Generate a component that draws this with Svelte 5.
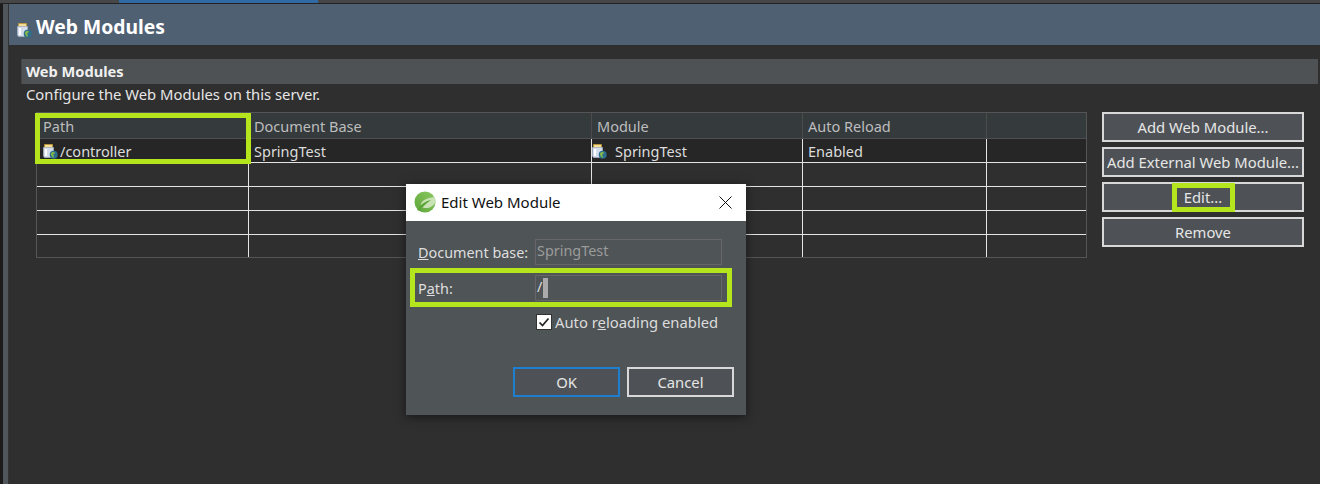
<script>
  const cols = ['Path', 'Document Base', 'Module', 'Auto Reload', ''];
  const rows = [0, 1, 2, 3];
  const buttons = ['Add Web Module...', 'Add External Web Module...', 'Edit...', 'Remove'];
</script>

{#snippet moduleIcon(cls)}
  <svg class={cls} width="15" height="15" viewBox="0 0 15 15" aria-hidden="true">
    <path d="M1.500 .5h8v3h-8z" fill="#f1dc9a" stroke="#c79a2e" stroke-width=".8" />
    <path d="M.5 3.500h10v8.500l-1 1.500h-8l-1-1.500z" fill="#d3dcec" stroke="#a9b6c8" stroke-width=".7" />
    <path d="M2 5h2v7h-2z" fill="#fff" />
    <circle cx="10.700" cy="10.700" r="4" fill="#2b6f8c" />
    <path d="M8 9.500c1-1.800 3-1.800 4-1 .4 1-1.300 1-1.700 1.900-.3 1 1.300 1.600.2 3.300-1.400-.4-2.800-2.400-2.500-4.200z" fill="#86b84a" />
  </svg>
{/snippet}

<div class="page">
  <div class="topbar"><div class="tab"></div></div>
  <div class="shell">
    <div class="rail"></div>
    <main>
      <header class="title">
        {@render moduleIcon('title-icon')}
        <h1>Web Modules</h1>
      </header>
      <section>
        <h2>Web Modules</h2>
        <p>Configure the Web Modules on this server.</p>
        <div class="content">
          <div class="table">
            <div class="row head">
              {#each cols as c}<div class="cell">{c}</div>{/each}
            </div>
            <div class="row first">
              <div class="cell"><span class="path-cell">{@render moduleIcon('cell-icon')}/controller</span></div>
              <div class="cell">SpringTest</div>
              <div class="cell"><span class="module-cell">{@render moduleIcon('cell-icon')}SpringTest</span></div>
              <div class="cell">Enabled</div>
              <div class="cell"></div>
            </div>
            {#each rows as r}
              <div class="row blank">
                {#each cols as c}<div class="cell"></div>{/each}
              </div>
            {/each}
          </div>
          <div class="buttons">
            {#each buttons as b}<button>{b}</button>{/each}
          </div>
        </div>
      </section>
    </main>
  </div>

  <div class="mark mark-table"></div>
  <div class="mark mark-edit"></div>

  <div class="dialog">
    <div class="dlg-title">
      <svg width="22" height="22" viewBox="0 0 22 22" aria-hidden="true">
        <defs>
          <linearGradient id="sp" x1="0" y1="1" x2="1" y2="0">
            <stop offset="0" stop-color="#5da639" />
            <stop offset="1" stop-color="#8cc861" />
          </linearGradient>
        </defs>
        <circle cx="11" cy="11" r="10.500" fill="url(#sp)" />
        <path d="M7 15.500c-1-5 4-8.500 13.500-9.500 1 2 1 3 1 5-2 4-6 6-9 6-2 0-4-.5-5.500-1.500z" fill="#c9e3b4" />
        <path d="M3 19c4-6 8-8.500 14-10-4 3-8 6-11 11z" fill="#5da639" />
      </svg>
      <span class="dlg-name">Edit Web Module</span>
      <svg class="close" width="13" height="13" viewBox="0 0 13 13" aria-hidden="true">
        <path d="M.5.5l12 12M12.500.5l-12 12" stroke="#111" stroke-width="1" fill="none" />
      </svg>
    </div>
    <div class="dlg-body">
      <div class="field">
        <span class="lab"><u>D</u>ocument base:</span>
        <div class="input dim">SpringTest</div>
      </div>
      <div class="field path">
        <span class="lab">P<u>a</u>th:</span>
        <div class="input">/<i class="sel"></i></div>
      </div>
      <label class="check">
        <span class="box">
          <svg width="14" height="14" viewBox="0 0 14 14" aria-hidden="true"><path d="M2.500 7.500l3 3 6-7" stroke="#222" stroke-width="1.700" fill="none" /></svg>
        </span>
        <span>Auto r<u>e</u>loading enabled</span>
      </label>
      <div class="dlg-actions">
        <button class="ok">OK</button>
        <button class="cancel">Cancel</button>
      </div>
    </div>
  </div>
</div>

<style>
  :global(body) { margin: 0; background: #2f2f2f; }
  .page {
    position: relative;
    width: 1320px;
    height: 484px;
    overflow: hidden;
    background: #2f2f2f;
    color: #dcdcdc;
    font-family: "Noto Sans", "Open Sans", sans-serif;
    font-size: 14.800px;
  }
  .topbar { height: 3px; background: #474747; padding-left: 119px; border-bottom: 1px solid #222; }
  .tab { width: 199px; height: 3px; background: #2f6aa5; }
  .shell { display: flex; height: 480px; }
  .rail { width: 9px; flex: none; background: linear-gradient(90deg, #1c1c1c 0 3px, #50565a 3px 8px, #333 8px); }
  main { flex: 1; min-width: 0; }
  .title { box-sizing: border-box; height: 41px; background: #4f6073; display: flex; align-items: center; padding: 4px 0 0 8px; gap: 4px; }
  .title-icon { margin-top: 7px; }
  h1 { margin: 0; font: bold 19.300px "Noto Sans", sans-serif; color: #fff; }
  section { padding: 14px 2px 0 12px; }
  h2 {
    margin: 0;
    height: 25px;
    background: #4e5254;
    border-left: 1px solid #444;
    padding-left: 4px;
    font: bold 14.600px/25px "Noto Sans", sans-serif;
    color: #f0f0f0;
  }
  p { margin: 0; padding-left: 5px; height: 28px; line-height: 21px; color: #e6e6e6; }
  .content { display: flex; padding-left: 15px; }
  .table { width: 1051px; height: 146px; border: 1px solid #555; box-sizing: border-box; font-size: 14.500px; }
  .row { display: grid; grid-template-columns: 211px 343px 211px 184px 1fr; }
  .cell { padding-left: 5px; box-sizing: border-box; border-left: 1px solid #e4e4e4; white-space: nowrap; line-height: 25px; height: 100%; color: #c8c8c8; }
  .cell:first-child { border-left: 0; }
  .head { height: 25px; background: #353a3d; border-bottom: 1px solid #4e4e4e; }
  .head .cell { border-left: 1px solid #4c4c4c; color: #bdbdbd; line-height: 27px; }
  .first { height: 24px; background: #262626; border-bottom: 1px solid #e4e4e4; box-sizing: border-box; }
  .first .cell { color: #dcdcdc; line-height: 24px; }
  .first .cell:first-child { padding-left: 6px; }
  .blank { height: 24px; border-bottom: 1px solid #e4e4e4; box-sizing: border-box; }
  .blank:last-child { border-bottom: 0; height: 22px; }
  .path-cell, .module-cell { display: flex; align-items: center; height: 24px; }
  .path-cell :global(svg) { margin-right: 2px; }
  .module-cell { margin-left: -5px; }
  .module-cell :global(svg) { margin-right: 8px; }
  .buttons { display: flex; flex-direction: column; gap: 5px; margin-left: 15px; }
  button {
    font: 14.800px "Noto Sans", sans-serif;
    color: #e6e6e6;
    background: #4e5256;
    border: 2px solid #d8d8d8;
    box-sizing: border-box;
    padding: 0;
  }
  .buttons button { width: 202px; height: 30px; }
  .mark { position: absolute; border: 5px solid #b5e61d; box-sizing: border-box; pointer-events: none; }
  .mark-table { left: 35px; top: 113px; width: 216px; height: 51px; }
  .mark-edit { left: 1172px; top: 183px; width: 63px; height: 29px; }
  .dialog {
    position: absolute;
    left: 406px; top: 184px;
    width: 340px; height: 231px;
    background: #4f5457;
    box-shadow: 0 2px 10px rgba(0,0,0,.5);
  }
  .dlg-title { height: 37px; background: #fff; display: flex; align-items: center; padding: 0 0 1px 8px; box-sizing: border-box; color: #111; }
  .dlg-name { margin-left: 5px; font-size: 15px; }
  .close { margin-left: auto; margin-right: 14px; }
  .dlg-body { padding: 18px 0 0 12px; }
  .field { display: flex; align-items: center; height: 26px; margin-bottom: 3px; font-size: 14.400px; }
  .field.path { box-sizing: border-box; margin-left: -8px; width: 322px; height: 39px; margin-bottom: 0; padding-left: 8px; border: 5px solid #b5e61d; }
  .lab { width: 117px; flex: none; color: #dedede; }
  .field.path .lab { margin-left: -5px; width: 117px; padding-top: 2px; }
  .input { width: 187px; height: 26px; box-sizing: border-box; border: 1px solid #666; padding: 0 0 3px 1px; display: flex; align-items: center; }
  .dim { color: #9b9b9b; }
  .sel { display: inline-block; width: 5px; height: 20px; background: #aaa; margin: 3px 0 0 1px; }
  .check { display: flex; align-items: center; gap: 3px; margin: 5px 0 0 118px; }
  .box { width: 16px; height: 16px; background: #fff; border: 1px solid #333; box-sizing: border-box; display: flex; align-items: center; justify-content: center; }
  .dlg-actions { display: flex; gap: 7px; margin: 35px 0 0 95px; }
  .dlg-actions button { width: 107px; height: 30px; }
  .ok { border-color: #1e7fd0; }
</style>
